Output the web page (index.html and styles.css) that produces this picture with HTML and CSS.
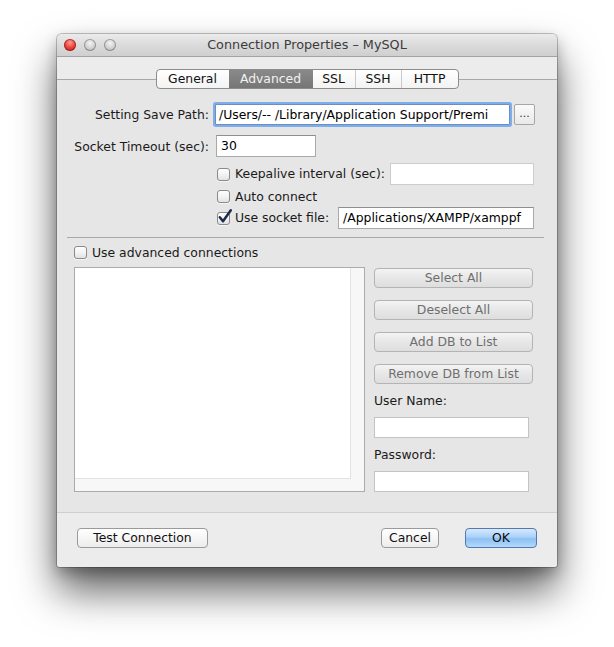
FILE: index.html
```html
<!DOCTYPE html>
<html>
<head>
<meta charset="utf-8">
<link rel="stylesheet" href="styles.css">
</head>
<body>
<div class="window">
  <div class="titlebar">
    <div class="lights"><span class="light red"></span><span class="light"></span><span class="light"></span></div>
    <div class="title">Connection Properties – MySQL</div>
    <div></div>
  </div>
  <div class="tabbar">
    <div class="tabs">
      <span class="tab t-general">General</span>
      <span class="tab t-adv selected">Advanced</span>
      <span class="tab t-ssl">SSL</span>
      <span class="tab t-ssh sep">SSH</span>
      <span class="tab t-http sep">HTTP</span>
    </div>
  </div>

  <div class="row r1">
    <span class="label">Setting Save Path:</span>
    <span class="field focus path">/Users/-- /Library/Application Support/Premi</span>
    <span class="btn small">...</span>
  </div>
  <div class="row r2">
    <span class="label">Socket Timeout (sec):</span>
    <span class="field timeout">30</span>
  </div>
  <div class="row r3">
    <span class="cb ind"></span>
    <span class="cblabel">Keepalive interval (sec):</span>
    <span class="field dim keep"></span>
  </div>
  <div class="row r4">
    <span class="cb ind"></span>
    <span class="cblabel">Auto connect</span>
  </div>
  <div class="row r5">
    <span class="cb ind checked"><svg width="15" height="15" viewBox="0 0 15 15"><path d="M2.8 7.2 L6 11.2 L13.8 0.3" fill="none" stroke="#1d2b4c" stroke-width="2.5" stroke-linecap="round" stroke-linejoin="round"/></svg></span>
    <span class="cblabel">Use socket file:</span>
    <span class="field sock">/Applications/XAMPP/xamppf</span>
  </div>
  <div class="separator"></div>
  <div class="row r6">
    <span class="cb adv"></span>
    <span class="cblabel">Use advanced connections</span>
  </div>

  <div class="lower">
    <div class="listbox"><div class="viewport"></div></div>
    <div class="side">
      <span class="btn dis first">Select All</span>
      <span class="btn dis">Deselect All</span>
      <span class="btn dis">Add DB to List</span>
      <span class="btn dis">Remove DB from List</span>
      <span class="sidelabel">User Name:</span>
      <span class="field sidefield"></span>
      <span class="sidelabel">Password:</span>
      <span class="field sidefield"></span>
    </div>
  </div>

  <div class="bottombar">
    <span class="btn push test">Test Connection</span>
    <span class="btn push cancel">Cancel</span>
    <span class="btn ok">OK</span>
  </div>
</div>
</body>
</html>
```

FILE: styles.css
```css
* { box-sizing: border-box; }
html, body { margin: 0; padding: 0; background: #ffffff; }
body {
  padding: 34px 57px 80px 57px;
  min-height: 647px;
  font-family: "DejaVu Sans", "Liberation Sans", sans-serif;
  font-size: 12.4px;
  color: #1a1a1a;
}
.window {
  width: 500px;
  height: 533px;
  background: #e6e6e6;
  border-radius: 5px 5px 3px 3px;
  display: flex;
  flex-direction: column;
  overflow: hidden;
  box-shadow: 0 0 0 1px rgba(0,0,0,0.22), 0 24px 40px rgba(0,0,0,0.62), 0 6px 14px rgba(0,0,0,0.25);
}
.titlebar {
  height: 23px;
  flex: none;
  display: grid;
  grid-template-columns: 1fr auto 1fr;
  align-items: center;
  background: linear-gradient(to bottom, #ebebeb 0%, #d8d8d8 60%, #cfcfcf 100%);
  border-bottom: 1px solid #a2a2a2;
}
.lights { display: flex; gap: 8px; padding-left: 7px; }
.light {
  width: 12px; height: 12px; border-radius: 50%;
  background: radial-gradient(circle at 50% 35%, #f4f4f4 0%, #cfcfcf 55%, #a9a9a9 100%);
  box-shadow: inset 0 0 0 1px rgba(0,0,0,0.28);
}
.light.red {
  background: radial-gradient(circle at 50% 30%, #ff9a94 0%, #e8433c 50%, #b21c15 100%);
  box-shadow: inset 0 0 0 1px rgba(110,0,0,0.45);
}
.title { font-size: 12.8px; color: #3c3c3c; line-height: 22px; }

.tabbar {
  flex: none;
  padding-top: 12px;
  display: flex;
  justify-content: center;
  background: linear-gradient(to bottom, #ececec 0, #ececec 22px, #a8a8a8 22px, #a8a8a8 23px, #e6e6e6 23px);
}
.tabs {
  display: flex;
  height: 20px;
  border: 1px solid #8d8d8d;
  border-radius: 4px;
  overflow: hidden;
  background: linear-gradient(to bottom, #ffffff 0%, #f3f3f3 100%);
}
.tab {
  display: block;
  text-align: center;
  line-height: 18px;
  color: #111;
}
.tab.sep { border-left: 1px solid #c9c9c9; }
.t-general { width: 72px; }
.t-adv { width: 84px; }
.t-ssl { width: 42px; }
.t-ssh { width: 46px; }
.t-http { width: 57px; }
.tab.selected {
  background: linear-gradient(to bottom, #8a8a8a 0%, #767676 100%);
  color: #f2f2f2;
}

.row {
  display: flex;
  align-items: center;
  flex: none;
  margin-right: 23px;
}
.label { width: 152px; flex: none; text-align: right; white-space: nowrap; }
.field {
  display: block;
  flex: none;
  background: #ffffff;
  border: 1px solid #a9a9a9;
  border-top-color: #8f8f8f;
  padding: 0 4px;
  white-space: nowrap;
  overflow: hidden;
  color: #000;
}
.r1 { height: 25px; margin-top: 13px; margin-right: 22px; }
.path {
  margin-left: 6px;
  width: 295px;
  height: 21px;
  line-height: 19px;
  padding-left: 3px;
  border-color: #6b8fc4;
  box-shadow: 0 0 0 2px #7eaee9;
  border-radius: 1px;
}
.btn {
  display: block;
  flex: none;
  text-align: center;
  white-space: nowrap;
  border-radius: 4px;
}
.btn.small {
  margin-left: 4px;
  width: 21px;
  height: 21px;
  line-height: 17px;
  font-size: 11px;
  border: 1px solid #a6a6a6;
  border-radius: 2px;
  background: linear-gradient(to bottom, #fafafa, #e9e9e9);
  color: #333;
}
.r2 { height: 22px; margin-top: 8px; }
.timeout { margin-left: 7px; width: 100px; height: 22px; line-height: 20px; }
.r3 { height: 22px; margin-top: 6px; }
.r4 { height: 13px; margin-top: 5px; }
.r5 { height: 22px; margin-top: 4px; }
.cb {
  display: block;
  flex: none;
  width: 13px;
  height: 13px;
  border: 1px solid #8a8a8a;
  border-radius: 3px;
  background: linear-gradient(to bottom, #ffffff 0%, #f0f0f0 60%, #e2e2e2 100%);
  box-shadow: 0 1px 0 rgba(255,255,255,0.6);
  position: relative;
}
.cb svg { position: absolute; left: -1px; top: -3px; overflow: visible; }
.cb.ind { margin-left: 160px; }
.cblabel { margin-left: 5px; line-height: 16px; white-space: nowrap; }
.keep { margin-left: auto; width: 144px; height: 22px; border-color: #cdcdcd; }
.sock { margin-left: auto; width: 196px; height: 22px; line-height: 20px; padding-left: 4px; }

.separator {
  flex: none;
  height: 1px;
  background: #a9a9a9;
  margin: 8px 13px 0 10px;
}
.r6 { height: 13px; margin-top: 8px; }
.cb.adv { margin-left: 17px; }

.lower {
  flex: none;
  display: flex;
  height: 225px;
  margin-top: 8px;
}
.listbox {
  margin-left: 17px;
  width: 291px;
  height: 225px;
  border: 1px solid #ababab;
  background: #f7f7f7;
  padding: 0 13px 12px 0;
}
.viewport {
  height: 100%;
  background: #ffffff;
  border-right: 1px solid #e2e2e2;
  border-bottom: 1px solid #e2e2e2;
}
.side {
  margin-left: 9px;
  width: 159px;
  display: flex;
  flex-direction: column;
}
.btn.dis {
  height: 20px;
  line-height: 18px;
  margin-top: 12px;
  border: 1px solid #b4b4b4;
  background: linear-gradient(to bottom, #f3f3f3 0%, #e7e7e7 50%, #dedede 100%);
  color: #6f6f6f;
}
.btn.dis.first { margin-top: 1px; }
.sidelabel { display: block; line-height: 16px; margin-top: 9px; }
.sidefield { width: 155px; height: 21px; margin-top: 8px; border-color: #c4c4c4; }

.bottombar {
  flex: 1;
  margin-top: 20px;
  border-top: 1px solid #cfcfcf;
  background: #ececec;
  display: flex;
  align-items: flex-start;
  padding: 15px 20px 0 20px;
}
.btn.push {
  height: 20px;
  line-height: 18px;
  border: 1px solid #9a9a9a;
  background: linear-gradient(to bottom, #ffffff 0%, #f6f6f6 50%, #ececec 100%);
  color: #111;
}
.test { width: 131px; }
.cancel { width: 58px; margin-left: auto; }
.btn.ok {
  width: 72px;
  height: 20px;
  line-height: 18px;
  margin-left: 26px;
  border: 1px solid #5877ad;
  background: linear-gradient(to bottom, #d6eafd 0%, #a9d1f9 45%, #8cc0f3 55%, #b3dafc 100%);
  color: #0c0c0c;
}
```
